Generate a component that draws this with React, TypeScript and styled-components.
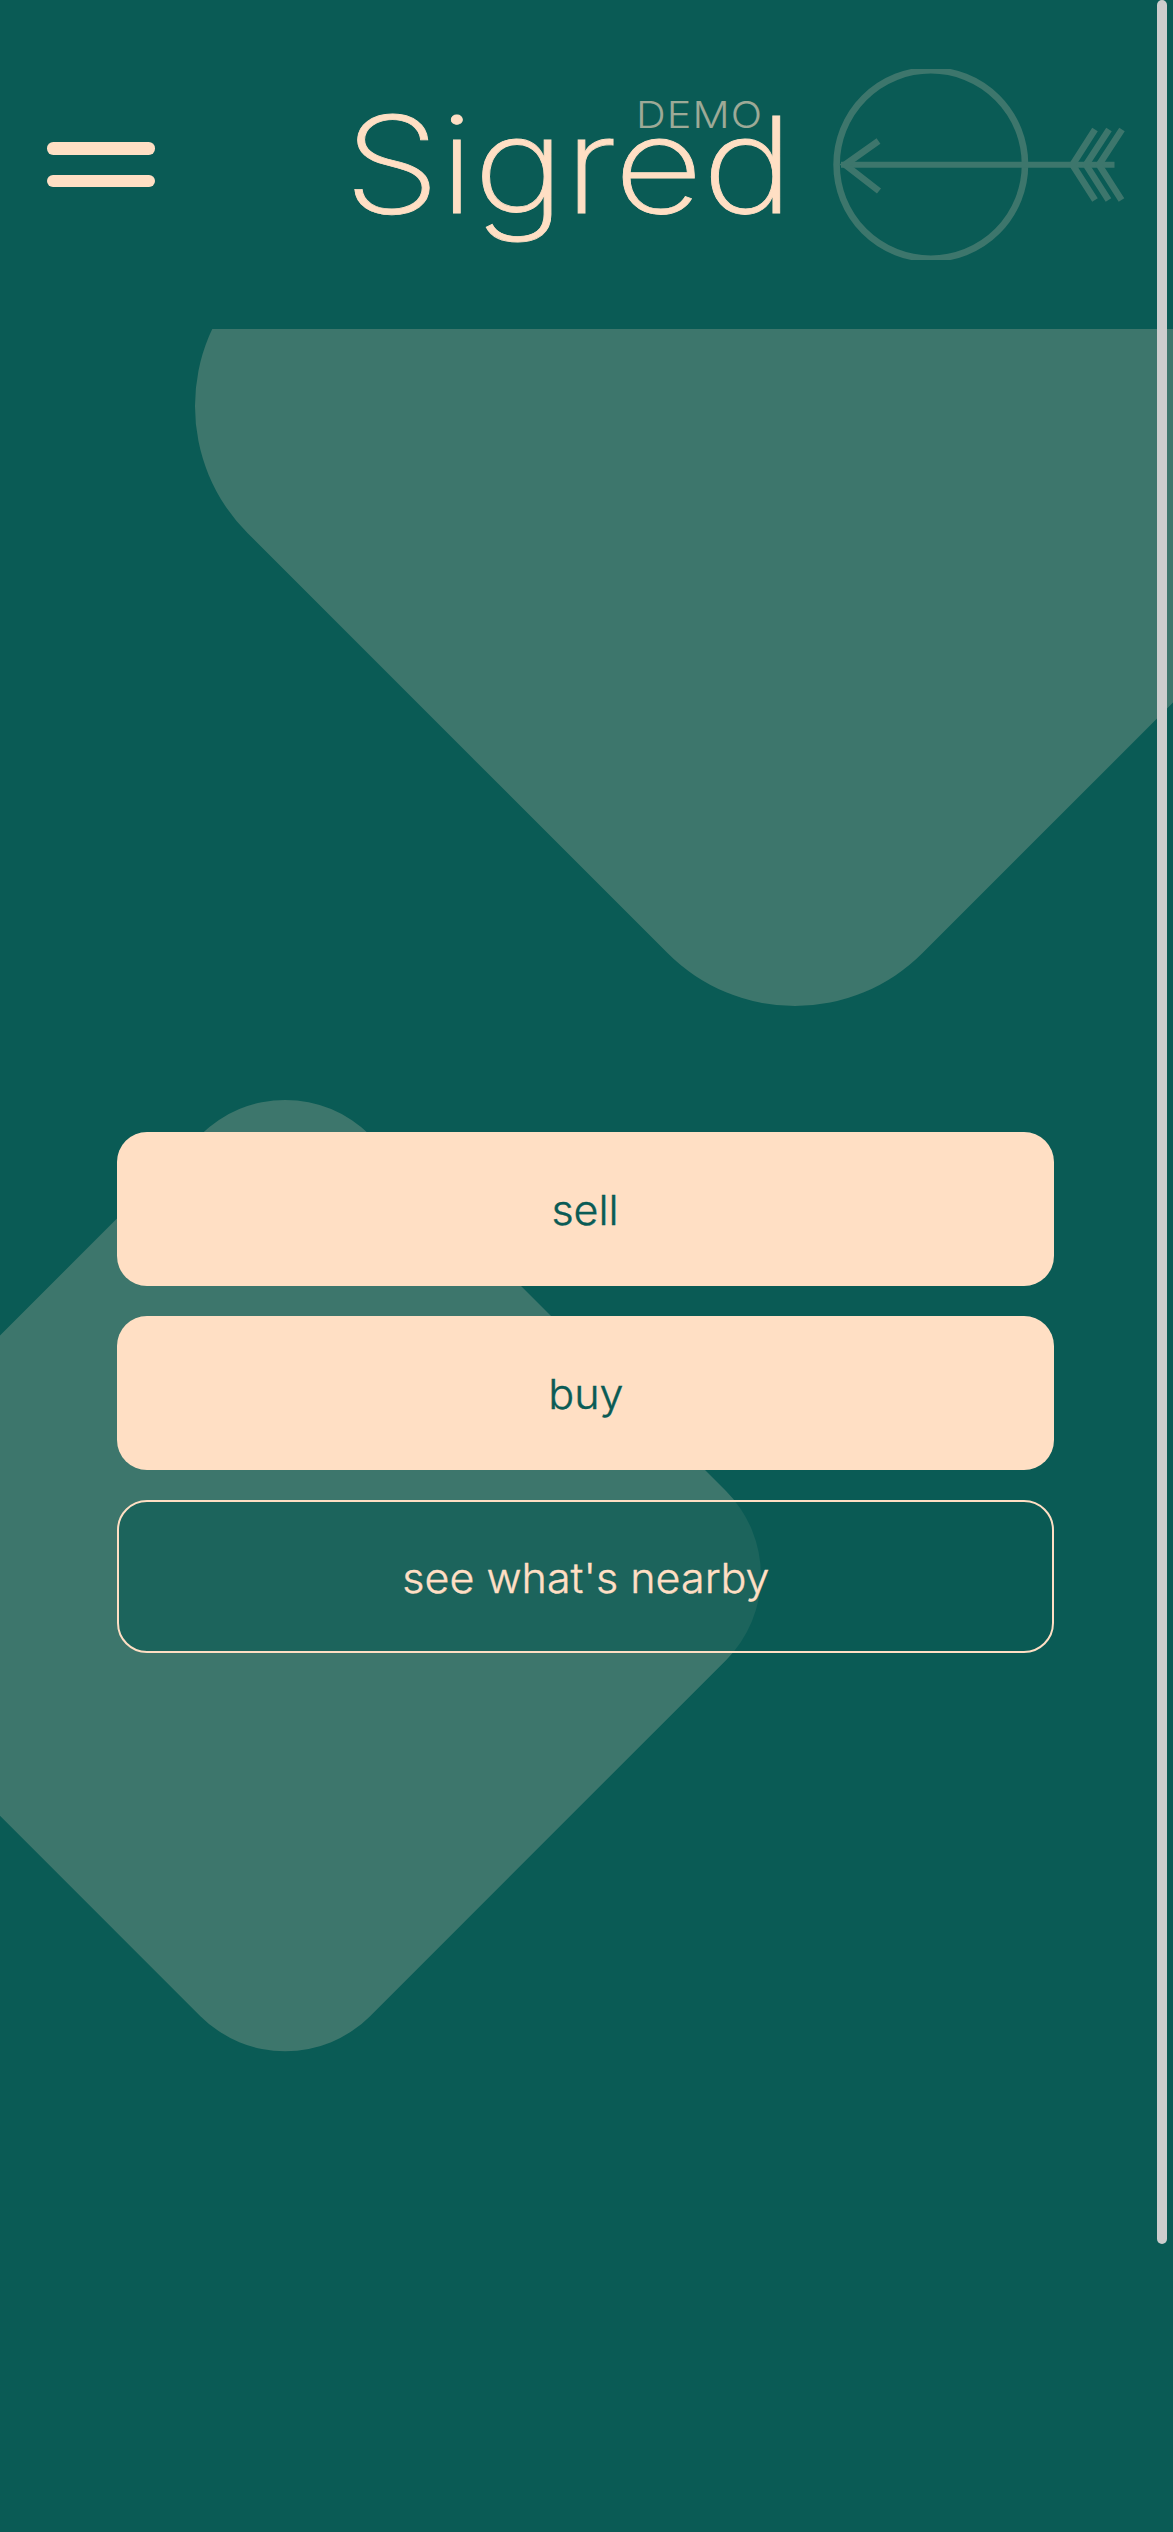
import React from "react";
import styled, { createGlobalStyle } from "styled-components";

const teal = "#0a5b55";
const moss = "#3d766c";
const cream = "#ffdfc4";

const GlobalStyle = createGlobalStyle`
  *, *::before, *::after { box-sizing: border-box; }
  html, body { margin: 0; background: ${teal}; overflow: hidden; }
  button { font: inherit; margin: 0; padding: 0; cursor: pointer; }
`;

const Screen = styled.div`
  position: relative;
  display: flex;
  flex-direction: column;
  width: 1173px;
  height: 2532px;
  overflow: hidden;
  background: ${teal};
  color: ${cream};
  font-family: Inter, "Open Sans", sans-serif;
`;

const Header = styled.header`
  display: grid;
  grid-template-columns: 353px 480px 1fr;
  align-items: center;
  height: 329px;
  flex: none;
`;

const MenuButton = styled.button`
  display: flex;
  flex-direction: column;
  gap: 20px;
  width: 108px;
  margin-left: 47px;
  border: 0;
  background: none;
`;

const MenuBar = styled.span`
  height: 12.5px;
  border-radius: 6.25px;
  background: ${cream};
`;

const Brand = styled.div`
  position: relative;
  height: 329px;
`;

const BrandName = styled.h1`
  margin: 0 0 0 -9px;
  padding-top: 84px;
  width: max-content;
  font-size: 134px;
  font-weight: 200;
  line-height: 160px;
  letter-spacing: -0.5px;
  -webkit-text-stroke: 0.8px ${cream};
  transform: scaleX(1.152);
  transform-origin: 0 0;
`;

const DemoTag = styled.span`
  position: absolute;
  left: 283px;
  top: 93px;
  font-size: 36.5px;
  font-weight: 300;
  line-height: 44px;
  letter-spacing: 1px;
  opacity: 0.6;
  transform: scaleX(1.13);
  transform-origin: 0 0;
`;

const Emblem = styled.svg`
  display: block;
  width: 300px;
  height: 191px;
`;

const Main = styled.main`
  position: relative;
  flex: 1;
  overflow: hidden;
  padding: 803px 119px 0 117px;
`;

const Diamond = styled.div<{ $x: number; $y: number; $size: number; $radius: number }>`
  position: absolute;
  left: ${(p) => p.$x - p.$size / 2}px;
  top: ${(p) => p.$y - p.$size / 2}px;
  width: ${(p) => p.$size}px;
  height: ${(p) => p.$size}px;
  border-radius: ${(p) => p.$radius}px;
  background: ${moss};
  transform: rotate(45deg);
`;

const Actions = styled.nav`
  position: relative;
  display: flex;
  flex-direction: column;
  gap: 30px;
`;

const ActionButton = styled.button<{ $outlined?: boolean }>`
  display: flex;
  align-items: center;
  justify-content: center;
  height: 153.8px;
  border: ${(p) => (p.$outlined ? `2px solid ${cream}` : "0")};
  border-radius: 30px;
  background: ${(p) => (p.$outlined ? "rgba(10, 91, 85, 0.65)" : cream)};
  color: ${(p) => (p.$outlined ? cream : teal)};
`;

const ActionLabel = styled.span`
  padding-top: 3px;
  font-size: 41px;
  font-weight: 300;
  line-height: 50px;
  -webkit-text-stroke: 0.4px currentColor;
  transform: scaleX(1.05);
`;

const ScrollThumb = styled.div`
  position: absolute;
  top: 0;
  right: 6.5px;
  width: 10px;
  height: 2244px;
  border-radius: 5px;
  background: #cdcdcd;
`;

function ArrowEmblem() {
  return (
    <Emblem viewBox="833 69 300 191" fill="none" stroke={moss} strokeWidth="6.6" aria-hidden="true">
      <circle cx="930.8" cy="164.5" r="94.2" />
      <path d="M841 164.7H1114.5" strokeWidth="6" />
      <path d="M878.5 141 845 164.7 879 191" />
      <path d="M1095 129.5 1072.5 164.7 1095 200" />
      <path d="M1109 129.5 1086 164.7 1108.5 200" />
      <path d="M1122 129.5 1099 164.7 1121.5 200" />
    </Emblem>
  );
}

export default function App() {
  return (
    <>
      <GlobalStyle />
      <Screen>
        <Header>
          <MenuButton aria-label="Menu">
            <MenuBar />
            <MenuBar />
          </MenuButton>
          <Brand>
            <BrandName>Sigred</BrandName>
            <DemoTag>DEMO</DemoTag>
          </Brand>
          <ArrowEmblem />
        </Header>
        <Main>
          <Diamond $x={794.5} $y={76.5} $size={954} $radius={180} />
          <Diamond $x={285} $y={1246} $size={742.5} $radius={120} />
          <Actions>
            <ActionButton>
              <ActionLabel>sell</ActionLabel>
            </ActionButton>
            <ActionButton>
              <ActionLabel>buy</ActionLabel>
            </ActionButton>
            <ActionButton $outlined>
              <ActionLabel>see what's nearby</ActionLabel>
            </ActionButton>
          </Actions>
        </Main>
        <ScrollThumb />
      </Screen>
    </>
  );
}
